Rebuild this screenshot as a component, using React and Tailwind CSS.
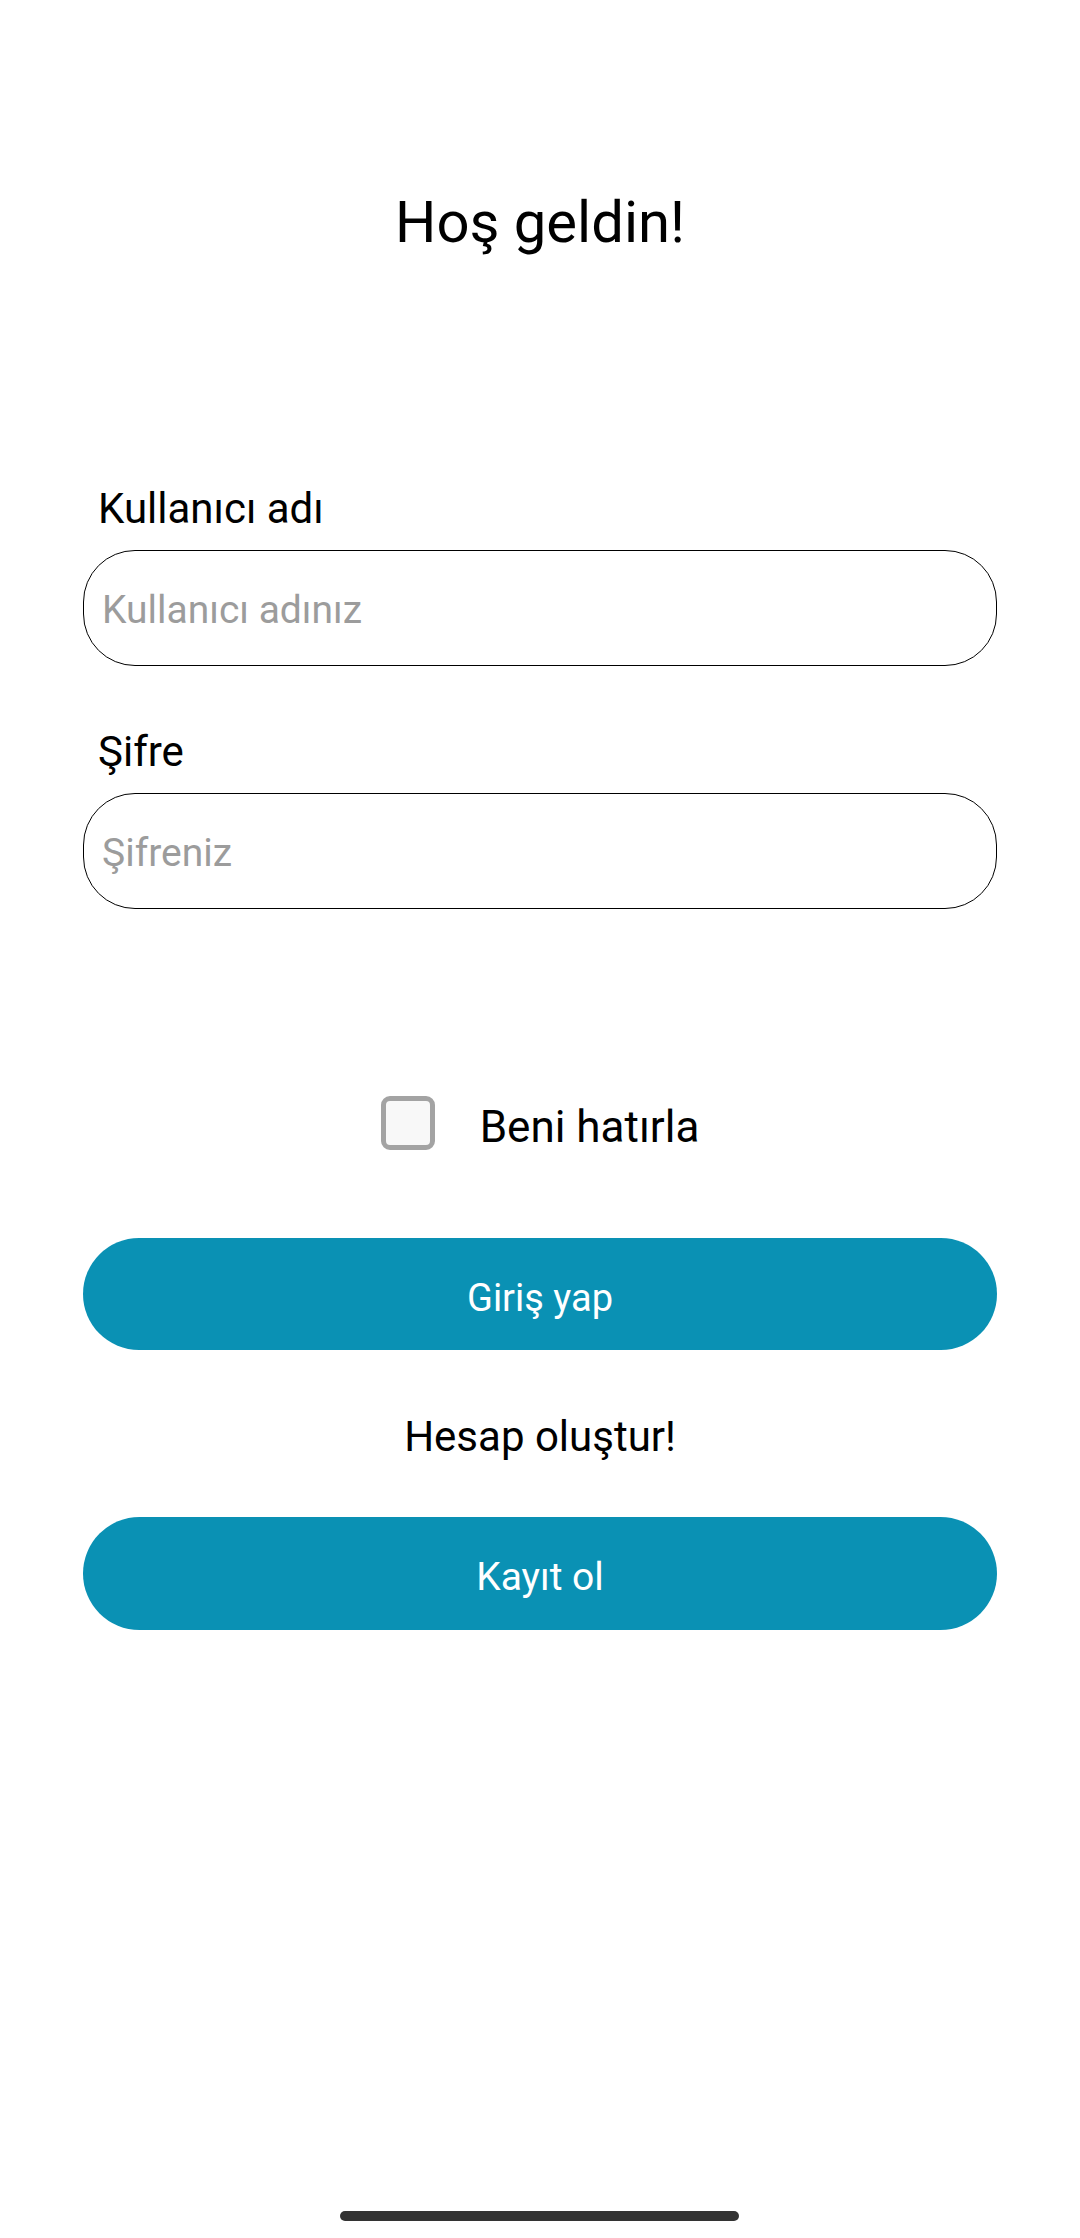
import React, { useState } from "react";

const font = { fontFamily: "Roboto, 'Noto Sans', sans-serif" };

const Field = ({ label, placeholder, type = "text", className = "" }) => (
  <div className={`flex flex-col ${className}`}>
    <label className="pl-[15px] text-[42px] leading-[42px] text-black">{label}</label>
    <input
      type={type}
      placeholder={placeholder}
      className="mt-[20px] h-[116px] w-full rounded-[52px] border border-black bg-white pl-[18px] pt-[4px] text-[39px] text-black outline-none placeholder:text-[#9c9c9c]"
    />
  </div>
);

export default function App() {
  const [remember, setRemember] = useState(false);

  return (
    <div style={font} className="relative flex h-[2238px] w-[1080px] flex-col bg-white px-[83px]">
      <h1 className="mt-[193px] text-center text-[58px] font-normal leading-[58px] text-black">
        Hoş geldin!
      </h1>

      <Field className="mt-[237px]" label="Kullanıcı adı" placeholder="Kullanıcı adınız" />
      <Field className="mt-[65px]" label="Şifre" placeholder="Şifreniz" type="password" />

      <div className="mt-[187px] flex items-start justify-center gap-[45px]">
        <button
          onClick={() => setRemember(!remember)}
          className="h-[54px] w-[54px] rounded-[9px] border-[5px] border-[#a3a3a3] bg-[#f8f8f8]"
          aria-label="Beni hatırla"
        >
          {remember && <span className="block h-full w-full rounded-[4px] bg-[#0a91b4]" />}
        </button>
        <span className="mt-[9px] text-[44px] leading-[44px] text-black">Beni hatırla</span>
      </div>

      <button className="mt-[88px] flex h-[112px] w-full items-center justify-center rounded-full bg-[#0a91b4] pt-[8px] text-[38px] leading-[38px] text-white">
        Giriş yap
      </button>

      <p className="mt-[66px] text-center text-[42px] leading-[42px] text-black">Hesap oluştur!</p>

      <button className="mt-[59px] flex h-[113px] w-full items-center justify-center rounded-full bg-[#0a91b4] pt-[8px] text-[39px] leading-[39px] text-white">
        Kayıt ol
      </button>

      <div className="absolute bottom-[17px] left-[340px] h-[10px] w-[399px] rounded-full bg-[#333333]" />
    </div>
  );
}
